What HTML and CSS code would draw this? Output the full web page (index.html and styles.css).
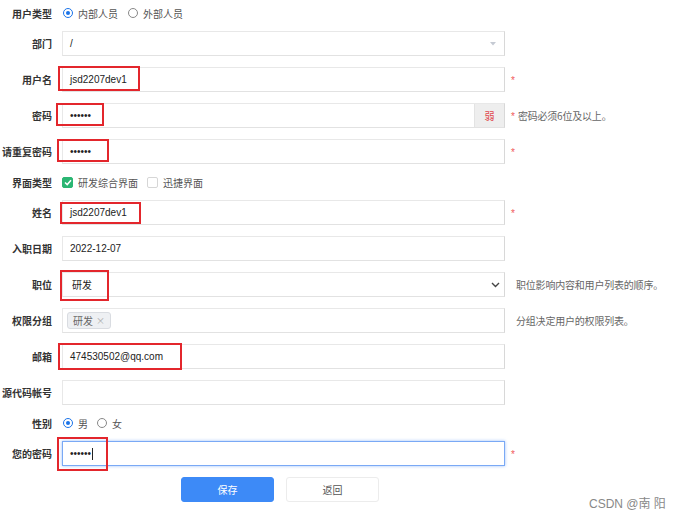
FILE: index.html
```html
<!DOCTYPE html>
<html>
<head>
<meta charset="utf-8">
<link rel="stylesheet" href="styles.css">
</head>
<body>
<div class="form">
  <div class="row opt-row">
    <div class="label">用户类型</div>
    <div class="opts">
      <span class="opt"><span class="radio on"></span>内部人员</span>
      <span class="opt"><span class="radio"></span>外部人员</span>
    </div>
  </div>

  <div class="row">
    <div class="label">部门</div>
    <div class="field">
      <span class="val">/</span>
      <svg class="caret-light" width="6" height="4" viewBox="0 0 6 4"><path d="M0 0 L6 0 L3 3.5 Z" fill="#c5cad3"/></svg>
    </div>
  </div>

  <div class="row">
    <div class="label">用户名</div>
    <div class="field">
      <span class="val">jsd2207dev1</span>
      <span class="mark m-user"></span>
    </div>
    <span class="star">*</span>
  </div>

  <div class="row">
    <div class="label">密码</div>
    <div class="field addon-field">
      <span class="val dots">••••••</span>
      <span class="addon">弱</span>
      <span class="mark m-pwd"></span>
    </div>
    <span class="star">*</span><span class="hint">密码必须6位及以上。</span>
  </div>

  <div class="row">
    <div class="label">请重复密码</div>
    <div class="field">
      <span class="val dots">••••••</span>
      <span class="mark m-pwd2"></span>
    </div>
    <span class="star">*</span>
  </div>

  <div class="row opt-row">
    <div class="label">界面类型</div>
    <div class="opts">
      <span class="opt"><span class="check on"><svg width="8" height="7" viewBox="0 0 8 7"><path d="M1 3.5 L3.2 5.6 L7 1.2" fill="none" stroke="#fff" stroke-width="1.5"/></svg></span>研发综合界面</span>
      <span class="opt opt-wide"><span class="check"></span>迅捷界面</span>
    </div>
  </div>

  <div class="row">
    <div class="label">姓名</div>
    <div class="field">
      <span class="val">jsd2207dev1</span>
      <span class="mark m-name"></span>
    </div>
    <span class="star">*</span>
  </div>

  <div class="row">
    <div class="label">入职日期</div>
    <div class="field"><span class="val">2022-12-07</span></div>
  </div>

  <div class="row">
    <div class="label">职位</div>
    <div class="field">
      <span class="val val-job">研发</span>
      <svg class="caret-dark" width="9" height="6" viewBox="0 0 9 6"><path d="M1 1 L4.5 4.5 L8 1" fill="none" stroke="#444" stroke-width="1.4"/></svg>
      <span class="mark m-job"></span>
    </div>
    <span class="hint hint-only">职位影响内容和用户列表的顺序。</span>
  </div>

  <div class="row">
    <div class="label">权限分组</div>
    <div class="field tag-field">
      <span class="tag">研发 <span class="x">×</span></span>
    </div>
    <span class="hint hint-only">分组决定用户的权限列表。</span>
  </div>

  <div class="row">
    <div class="label">邮箱</div>
    <div class="field">
      <span class="val">474530502@qq.com</span>
      <span class="mark m-mail"></span>
    </div>
  </div>

  <div class="row">
    <div class="label">源代码帐号</div>
    <div class="field"></div>
  </div>

  <div class="row opt-row">
    <div class="label">性别</div>
    <div class="opts">
      <span class="opt opt-narrow"><span class="radio on"></span>男</span>
      <span class="opt"><span class="radio"></span>女</span>
    </div>
  </div>

  <div class="row">
    <div class="label">您的密码</div>
    <div class="field focus">
      <span class="val dots">••••••<span class="cursor"></span></span>
      <span class="mark m-mine"></span>
    </div>
    <span class="star">*</span>
  </div>

  <div class="btns">
    <button class="btn primary">保存</button>
    <button class="btn">返回</button>
  </div>
</div>
<div class="watermark">CSDN @南 阳</div>
</body>
</html>
```

FILE: styles.css
```css
html, body {
  margin: 0;
  padding: 0;
  background: #fff;
}
body {
  width: 681px;
  height: 517px;
  overflow: hidden;
  position: relative;
  font-family: "Liberation Sans", "Noto Sans CJK SC", sans-serif;
  font-size: 10px;
  color: #333;
}
.form {
  display: flex;
  flex-direction: column;
  gap: 11px;
  padding-top: 6px;
}
.row {
  display: flex;
  align-items: center;
  height: 25px;
}
.opt-row {
  height: 14px;
}
.label {
  width: 52px;
  margin-right: 10px;
  text-align: right;
  font-weight: bold;
  color: #333;
  white-space: nowrap;
  font-family: "Noto Sans CJK SC", sans-serif;
  font-size: 10px;
}
.field {
  position: relative;
  box-sizing: border-box;
  width: 443px;
  height: 25px;
  border: 1px solid #e8e8e8;
  border-right-color: #d8d8d8;
  border-bottom-color: #e2e2e2;
  background: #fff;
  display: flex;
  align-items: center;
  padding-left: 7px;
}
.val {
  color: #222;
  font-size: 10px;
  white-space: nowrap;
}
.val-job {
  padding-left: 2px;
}
.dots {
  letter-spacing: 0;
  font-size: 10px;
  display: flex;
  align-items: center;
}
.cursor {
  display: inline-block;
  width: 1px;
  height: 12px;
  background: #222;
  margin-left: 1px;
}
.caret-light {
  position: absolute;
  right: 8px;
  top: 10px;
}
.caret-dark {
  position: absolute;
  right: 4px;
  top: 9px;
}
.addon-field {
  padding-right: 0;
}
.addon {
  margin-left: auto;
  align-self: stretch;
  width: 29px;
  background: #eeeeee;
  border-left: 1px solid #e3e3e3;
  color: #e0474c;
  display: flex;
  align-items: center;
  justify-content: center;
  font-family: "Noto Sans CJK SC", sans-serif;
  font-size: 10px;
}
.star {
  color: #f05a5a;
  margin-left: 6px;
  font-size: 10px;
  position: relative;
  top: 1px;
}
.hint {
  color: #666;
  margin-left: 3px;
  font-family: "Noto Sans CJK SC", sans-serif;
  font-size: 10px;
  letter-spacing: -0.2px;
}
.hint-only {
  margin-left: 11px;
}
.opts {
  display: flex;
  align-items: center;
  color: #444;
}
.opt {
  display: flex;
  align-items: center;
  margin-right: 9px;
  font-family: "Noto Sans CJK SC", sans-serif;
  color: #555;
}
.opt-wide {
  margin-left: 0;
}
.opt-narrow {
  margin-right: 8px;
}
.radio {
  box-sizing: border-box;
  width: 10px;
  height: 10px;
  border-radius: 50%;
  border: 1px solid #888;
  margin: 0 5px 0 1px;
  background: #fff;
  position: relative;
}
.radio.on {
  border-color: #1a73e8;
}
.radio.on::after {
  content: "";
  position: absolute;
  left: 2px;
  top: 2px;
  width: 4px;
  height: 4px;
  border-radius: 50%;
  background: #1a73e8;
}
.check {
  box-sizing: border-box;
  width: 11px;
  height: 11px;
  border-radius: 2px;
  border: 1px solid #d6d6d6;
  margin-right: 5px;
  display: flex;
  align-items: center;
  justify-content: center;
  background: #fff;
}
.check.on {
  background: #2bb673;
  border-color: #2bb673;
}
.tag-field {
  padding-left: 4px;
}
.tag {
  box-sizing: border-box;
  height: 17px;
  padding: 0 5px;
  display: flex;
  align-items: center;
  background: #eef0f3;
  border: 1px solid #d9dce1;
  border-radius: 3px;
  color: #666;
  font-family: "Noto Sans CJK SC", sans-serif;
  font-size: 10px;
}
.tag .x {
  color: #aaa;
  margin-left: 3px;
  font-size: 9px;
}
.focus {
  border: 1px solid #7aa9f5;
  box-shadow: 0 0 3px rgba(90, 150, 245, 0.6);
}
.mark {
  position: absolute;
  box-sizing: border-box;
  border: 2px solid #e3262c;
  pointer-events: none;
}
.m-user { left: -5px; top: -2px; width: 82px; height: 25px; }
.m-pwd  { left: -7px; top: -1px; width: 48px; height: 23px; }
.m-pwd2 { left: -6px; top: -1px; width: 52px; height: 23px; }
.m-name { left: -3px; top: 1px; width: 81px; height: 22px; }
.m-job  { left: -3px; top: -3px; width: 49px; height: 31px; }
.m-mail { left: -5px; top: -2px; width: 124px; height: 27px; }
.m-mine { left: -6px; top: -5px; width: 51px; height: 34px; }
.btns {
  display: flex;
  gap: 12px;
  margin-left: 181px;
}
.btn {
  box-sizing: border-box;
  width: 93px;
  height: 25px;
  border-radius: 3px;
  border: 1px solid #ececec;
  background: #fff;
  color: #555;
  font-family: "Noto Sans CJK SC", sans-serif;
  font-size: 10px;
  padding: 0;
}
.btn.primary {
  background: #3d8af7;
  border-color: #3d8af7;
  color: #fff;
}
.watermark {
  position: absolute;
  left: 589px;
  top: 494px;
  color: #888;
  font-family: "Liberation Sans", "Noto Sans CJK SC", sans-serif;
  font-size: 12px;
  white-space: nowrap;
}
```
